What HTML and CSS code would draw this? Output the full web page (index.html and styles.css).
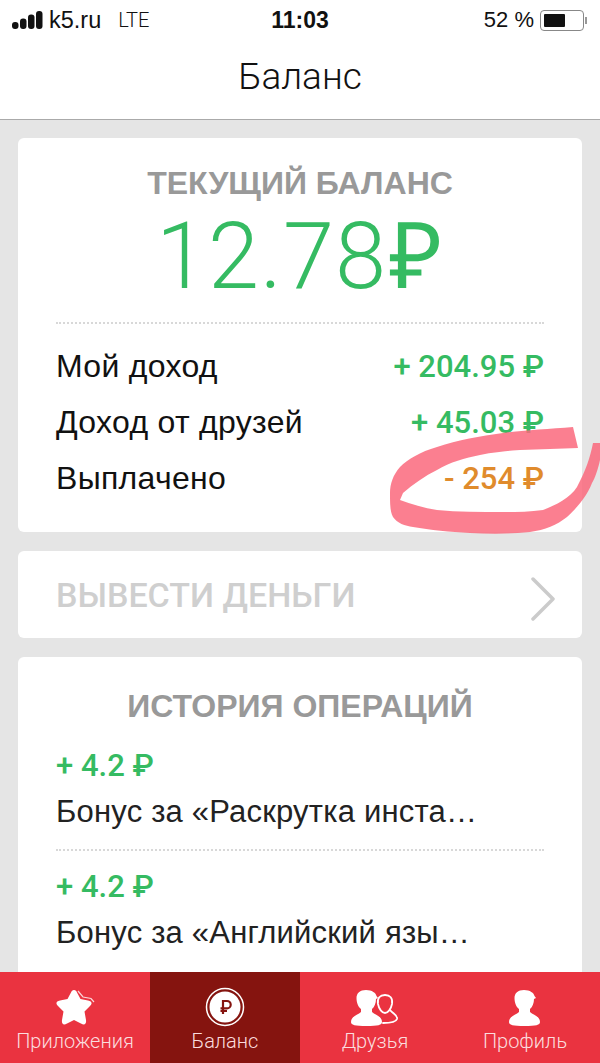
FILE: index.html
```html
<!DOCTYPE html>
<html>

<head>
    <title>Баланс</title>
    <link rel="stylesheet" href="styles.css">
</head>

<body>
    <div class="screen">
        <div class="status-bar">
            <div class="status-left">
                <svg class="signal" width="31" height="18" viewBox="0 0 31 18">
                    <rect x="0" y="11" width="6.500" height="7" rx="3" />
                    <rect x="8" y="7.500" width="6.500" height="10.500" rx="3" />
                    <rect x="16" y="3.500" width="6.500" height="14.500" rx="3" />
                    <rect x="24" y="0" width="6.500" height="18" rx="3" />
                </svg>
                <span class="carrier">k5.ru</span>
                <span class="network">LTE</span>
            </div>
            <div class="status-time">11:03</div>
            <div class="status-right">
                <span>52 %</span>
                <span class="battery"><span class="battery-level"></span></span>
                <span class="battery-tip"></span>
            </div>
        </div>

        <div class="nav-bar">Баланс</div>

        <div class="content">
            <div class="card balance-card">
                <h2 class="card-title">ТЕКУЩИЙ БАЛАНС</h2>
                <div class="balance-value">12.78<span class="balance-rub">₽</span></div>
                <div class="dots"></div>
                <div class="row">
                    <span>Мой доход</span>
                    <span class="amount green">+ 204.95 ₽</span>
                </div>
                <div class="row">
                    <span>Доход от друзей</span>
                    <span class="amount green">+ 45.03 ₽</span>
                </div>
                <div class="row">
                    <span>Выплачено</span>
                    <span class="amount orange">- 254 ₽</span>
                </div>
            </div>

            <div class="card withdraw-card">
                <span>ВЫВЕСТИ ДЕНЬГИ</span>
                <svg class="chevron" width="26" height="44" viewBox="0 0 26 44">
                    <path d="M3 2 L23 22 L3 42" fill="none" stroke="#cbcbcb" stroke-width="3.500" stroke-linecap="round" stroke-linejoin="round" />
                </svg>
            </div>

            <div class="card history-card">
                <h2 class="card-title history-title">ИСТОРИЯ ОПЕРАЦИЙ</h2>
                <div class="history-item">
                    <div class="amount green">+ 4.2 ₽</div>
                    <div class="history-text">Бонус за «Раскрутка инста…</div>
                </div>
                <div class="dots"></div>
                <div class="history-item">
                    <div class="amount green">+ 4.2 ₽</div>
                    <div class="history-text">Бонус за «Английский язы…</div>
                </div>
            </div>
        </div>

        <div class="tab-bar">
            <div class="tab">
                <svg width="42" height="42" viewBox="0 0 42 42">
                    <path d="M20 3 C21.500 3 22.500 4 23 5.500 L26.500 12 L34 13.500 C38 14.200 38.500 16.500 36 19 L30.500 24.500 L32 33 C32.600 37 30.500 38.500 27 36.500 L20 33 L13 36.500 C9.500 38.500 7.400 37 8 33 L9.500 24.500 L4 19 C1.500 16.500 2 14.200 6 13.500 L13.500 12 L17 5.500 C17.500 4 18.500 3 20 3 Z" fill="#fff" />
                    <path d="M24 4 L29 10 L37 11.500 L40 15" fill="none" stroke="#fff" stroke-width="1.200" opacity="0.8" />
                </svg>
                <span>Приложения</span>
            </div>
            <div class="tab tab-active">
                <svg width="42" height="42" viewBox="0 0 42 42">
                    <circle cx="21" cy="20" r="18.500" fill="none" stroke="#fff" stroke-width="1.500" />
                    <circle cx="21" cy="20" r="15.500" fill="#fff" />
                    <path d="M19 27 V14 H23 A3.700 3.700 0 0 1 23 21.400 H16.500 M16.500 24 H23" fill="none" stroke="#85140f" stroke-width="2.200" />
                </svg>
                <span>Баланс</span>
            </div>
            <div class="tab">
                <svg width="48" height="42" viewBox="0 0 48 42">
                    <path d="M15 3 C21 3 25 6 25.500 9 L27 11 L25 12 C25 16 23.500 20 21 22 V25 C24 28 31 29 31 35 C31 38 27 39 15.500 39 C4 39 0 38 0 35 C0 29 7 28 10 25 V22 C7 20 5.500 15 5.500 11 C5.500 6 9 3 15 3 Z" fill="#fff" />
                    <path d="M27 17 C26 11 29 8 34 8 C39 8 42 11 41 17 C40 22 37 26 34 26 C31 26 28 22 27 17 Z" fill="none" stroke="#fff" stroke-width="1.800" />
                    <path d="M39 23 C42 27 47 28 46 32 C45 35 40 36 32 36" fill="none" stroke="#fff" stroke-width="1.800" stroke-linecap="round" />
                </svg>
                <span>Друзья</span>
            </div>
            <div class="tab">
                <svg width="32" height="42" viewBox="0 0 32 42">
                    <path d="M15 3 C21 3 25 6 25.500 9 L27 11 L25 12 C25 16 23.500 20 21 22 V25 C24 28 31 29 31 35 C31 38 27 39 15.500 39 C4 39 0 38 0 35 C0 29 7 28 10 25 V22 C7 20 5.500 15 5.500 11 C5.500 6 9 3 15 3 Z" fill="#fff" />
                </svg>
                <span>Профиль</span>
            </div>
        </div>

        <!-- marker scribble drawn over the screenshot -->
        <svg class="scribble" width="600" height="1063" viewBox="0 0 600 1063">
            <path d="M573 427 C550 429 525 430 503 433 C480 436 458 440 437 447 C420 452 408 459 400 467 C393 475 390 484 390 493 C390 503 390 512 393 517 C397 523 405 526 413 527 C430 530 450 532 470 533 C490 534 512 534 530 532 C545 530 557 525 567 517 C577 508 587 496 592 483 C597 475 602 456 602 443 L593 443 C590 458 586 470 577 487 C570 498 556 505 543 510 C530 512 517 512 503 512 C480 512 458 512 437 510 C424 508 411 504 400 500 L403 493 C413 484 425 476 437 470 C450 462 465 458 480 455 C495 452 507 451 520 450 C540 449 560 449 578 448 Z" />
        </svg>
    </div>
</body>

</html>
```

FILE: styles.css
```css
* {
    box-sizing: border-box;
}

body {
    margin: 0;
    font-family: "Liberation Sans", Arial, sans-serif;
    color: #111;
}

.screen {
    position: relative;
    width: 600px;
    height: 1063px;
    display: flex;
    flex-direction: column;
    overflow: hidden;
    background-color: #e5e5e5;
}

.status-bar {
    height: 40px;
    padding: 0 12px;
    display: grid;
    grid-template-columns: 1fr auto 1fr;
    align-items: center;
    background-color: #fff;
    font-size: 22px;
}

.status-left {
    display: flex;
    align-items: center;
    gap: 6px;
}

.carrier {
    font-size: 23.500px;
}

.signal {
    fill: #111;
}

.network {
    margin-left: 11px;
    font-size: 20px;
    font-family: Roboto, sans-serif;
    font-weight: 300;
}

.status-time {
    font-size: 23px;
    font-weight: bold;
}

.status-right {
    display: flex;
    justify-content: flex-end;
    align-items: center;
    margin-right: 1px;
}

.battery {
    width: 44px;
    height: 21px;
    margin-left: 6px;
    padding: 3px;
    border: 1px solid #888;
    border-radius: 4px;
}

.battery-level {
    display: block;
    width: 21px;
    height: 100%;
    border-radius: 1px;
    background-color: #111;
}

.battery-tip {
    width: 2px;
    height: 7px;
    margin-left: 1px;
    background-color: #999;
}

.nav-bar {
    height: 80px;
    padding-bottom: 7px;
    display: flex;
    justify-content: center;
    align-items: center;
    background-color: #fff;
    border-bottom: 1px solid #aaa;
    font-family: Roboto, sans-serif;
    font-weight: 300;
    font-size: 37px;
}

.content {
    flex: 1;
    min-height: 0;
    padding: 18px 18px 0;
    display: flex;
    flex-direction: column;
    gap: 19px;
    overflow: hidden;
}

.card {
    flex-shrink: 0;
    background-color: #fff;
    border-radius: 6px;
}

.balance-card {
    height: 394px;
    padding: 27px 38px 0;
}

.card-title {
    margin: 0;
    text-align: center;
    font-size: 32px;
    line-height: 36px;
    color: #999;
}

.balance-value {
    margin-top: 2px;
    text-align: center;
    font-family: Roboto, sans-serif;
    font-weight: 300;
    font-size: 92px;
    line-height: 106px;
    letter-spacing: 1px;
    color: #35bb62;
}

.balance-rub {
    font-family: "Liberation Sans", sans-serif;
    font-weight: normal;
    margin-left: 2px;
}

.dots {
    border-top: 2px dotted #d8d8d8;
}

.balance-card .dots {
    margin-top: 12px;
    margin-bottom: 14px;
}

.row {
    height: 56px;
    display: flex;
    justify-content: space-between;
    align-items: center;
    font-size: 32px;
    letter-spacing: 0.3px;
}

.amount {
    font-family: Roboto, sans-serif;
    font-weight: 500;
    font-size: 31px;
    letter-spacing: 0;
}

.green {
    color: #35bb62;
}

.orange {
    color: #e08b2c;
}

.withdraw-card {
    height: 87px;
    padding: 0 26px 0 38px;
    display: flex;
    justify-content: space-between;
    align-items: center;
    font-family: Roboto, sans-serif;
    font-size: 34px;
    font-weight: 500;
    color: #cfcfcf;
}

.chevron {
    margin-top: 8px;
}

.history-card {
    height: 340px;
    padding: 31px 38px 0;
}

.history-title {
    margin-bottom: 19px;
}

.history-item {
    height: 92px;
}

.history-card .amount {
    line-height: 46px;
}

.history-text {
    font-size: 31px;
    line-height: 46px;
    letter-spacing: 0.2px;
    color: #222;
}

.history-card .dots {
    margin-top: 14px;
    margin-bottom: 13px;
}

.tab-bar {
    height: 91px;
    flex-shrink: 0;
    display: grid;
    grid-template-columns: repeat(4, 1fr);
    background-color: #ea3340;
    z-index: 1;
}

.tab {
    padding-top: 15px;
    display: flex;
    flex-direction: column;
    align-items: center;
    font-size: 20px;
    line-height: 24px;
    font-family: Roboto, sans-serif;
    font-weight: 300;
    color: #fbdcde;
}

.tab-active {
    background-color: #85140f;
}

.scribble {
    position: absolute;
    top: 0;
    left: 0;
    z-index: 2;
    fill: rgba(250, 105, 125, 0.85);
    filter: blur(0.7px);
}
```
